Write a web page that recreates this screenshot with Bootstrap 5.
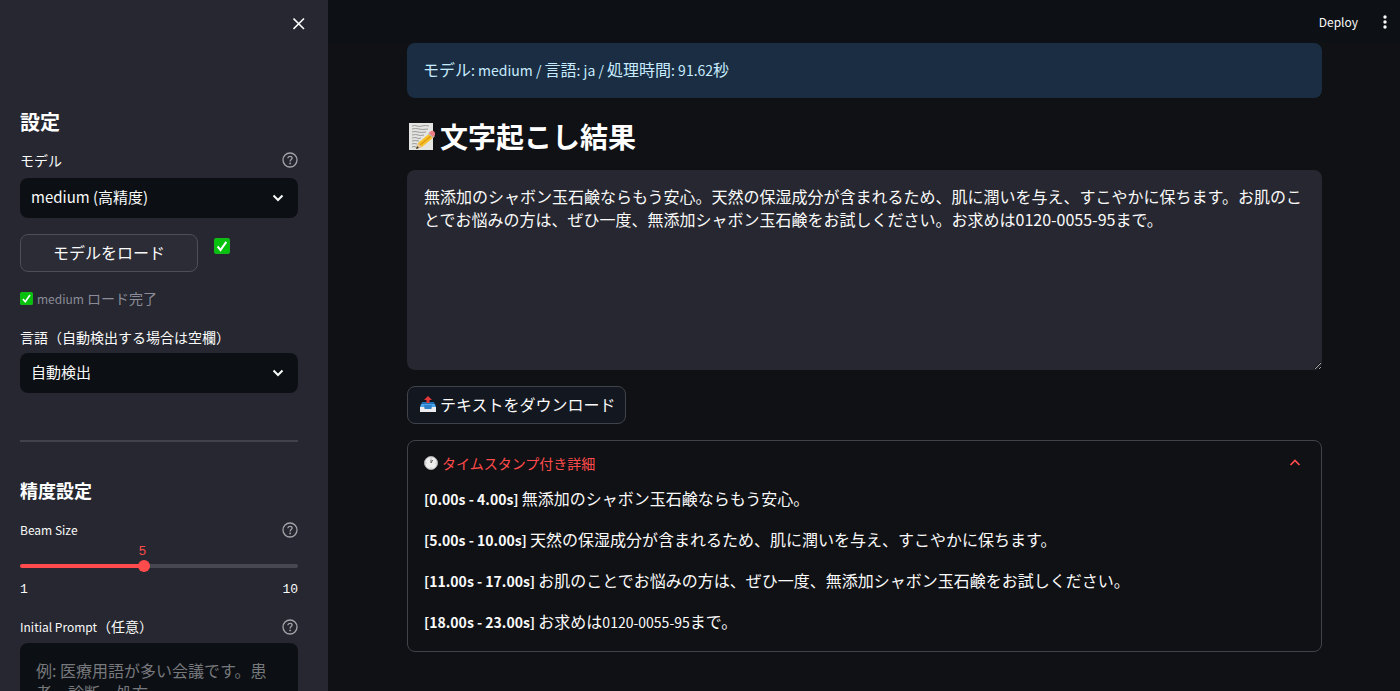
<!DOCTYPE html>
<html lang="ja" data-bs-theme="dark">
<head>
<meta charset="utf-8">
<meta name="viewport" content="width=device-width, initial-scale=1">
<title>文字起こし</title>
<link href="https://cdn.jsdelivr.net/npm/bootstrap@5.3.0/dist/css/bootstrap.min.css" rel="stylesheet">
<style>
  :root { --panel: #262730; --ink: #fafafa; --field: #0c1014; --accent: #ff4b4b; --line: #41434b; }
  body { background: #101115; color: var(--ink); font: 400 16px/24px "Noto Sans CJK JP", sans-serif; }
  .side-panel { width: 328px; background: var(--panel); padding: 0 30px 0 20px; overflow-y: auto; scrollbar-width: none; }
  .side-top { height: 110px; padding-top: 12px; margin-right: -7px; }
  .main-pane { overflow-y: auto; scrollbar-width: none; }
  .top-bar { height: 43px; background: #0d1014; padding: 0 8px 0 0; gap: 20px; }
  .page-body { padding: 0 78px 39px 79px; }
  .bare { background: none; border: 0; padding: 0; color: inherit; line-height: 0; }
  .latin { font-size: 14px; line-height: 16px; }
  .latin-sm { font-size: 12px; }
  h1, h2, h3 { font-weight: 700; margin: 0; }
  h1 { font-size: 28px; line-height: 40px; margin: 18px 0 14px; }
  h2 { font-size: 20px; line-height: 24px; }
  h3 { font-size: 18px; line-height: 24px; }
  .field-label { font-size: 14px; line-height: 20px; }
  .field-label-lone { margin: 18px 0 6px; }
  .help { color: #a3a4a9; }
  .pick { font-size: 15px; line-height: 22px; height: 40px; padding: 8px 40px 10px 11px; border: 0; border-radius: 8px; color: var(--ink); background-color: var(--field);
    background-image: url("data:image/svg+xml,%3Csvg xmlns='http://www.w3.org/2000/svg' viewBox='0 0 12 12'%3E%3Cpath d='M1.5 3.5 6 8l4.500-4.500' fill='none' stroke='%23fafafa' stroke-width='2'/%3E%3C/svg%3E"); background-size: 12px 12px; background-position: right 14px center; }
  .act { height: 38px; border: 1px solid #4d4e58; border-radius: 8px; padding: 0 12px 3px; font-size: 16px; line-height: 32px; color: var(--ink); background: #2b2c36; }
  .act-wide { width: 64%; }
  .act-dark { background: #131720; border-color: var(--line); padding-right: 9px; }
  .caption-line { font-size: 14px; line-height: 20px; color: #8b8c98; }
  .divider { height: 2px; background: #41424c; border: 0; opacity: 1; margin: 47px 0 36px; }
  .mono { font: 13px/16px "Liberation Mono", monospace; }
  .slider-box { position: relative; padding-top: 20px; }
  .slider-box output { position: absolute; top: 4px; left: 44%; transform: translateX(-50%); color: var(--accent); }
  .slider-ends { margin: 10px 0 18px; }
  .slider { appearance: none; display: block; width: 100%; height: 12px; margin: 0; background: none; }
  .slider::-webkit-slider-runnable-track { height: 4px; border-radius: 4px; background: linear-gradient(to right, var(--accent) 44%, #464751 44%); }
  .slider::-webkit-slider-thumb { appearance: none; width: 12px; height: 12px; margin-top: -4px; border-radius: 50%; background: var(--accent); }
  .prompt-box { background: var(--field); border: 0; border-radius: 8px; height: 96px; padding: 16px; line-height: 22px; resize: none; color: var(--ink); }
  .prompt-box::placeholder { color: #77787c; }
  .info-box { background: #1a2d42; color: #c7ebff; border: 0; border-radius: 8px; padding: 14px 16px 17px; margin: 0; }
  .result-box { display: block; background: var(--panel); border: 0; border-radius: 8px; height: 200px; padding: 15px 16px 16px 17px; line-height: 23px; color: var(--ink); resize: vertical; }
  .detail-box { border: 1px solid var(--line); border-radius: 8px; padding: 12px 16px 18px; }
  .detail-box summary { list-style: none; color: var(--accent); font-size: 14px; line-height: 20px; padding-right: 4px; margin-bottom: 13px; }
  .detail-box p { margin: 0 0 17px; }
  .detail-box p:last-child { margin: 0; }
</style>
</head>
<body>
<svg class="d-none">
  <symbol id="check" viewBox="0 0 16 16"><rect width="16" height="16" rx="2" fill="#18b51c"/><rect x="1" y="1" width="14" height="14" rx="1" fill="#06c20d"/><path d="M3.600 8.500 6.500 12 12.300 3.800" fill="none" stroke="#fff" stroke-width="2"/></symbol>
  <symbol id="help" viewBox="0 0 16 16"><circle cx="8" cy="8" r="7" fill="none" stroke="currentColor" stroke-width="1.300"/><path d="M5.900 6.300C6 4.900 6.800 4.300 8 4.300c1.300 0 2.100.8 2.100 1.800C10.100 7.500 8.100 7.600 8.100 9.400" fill="none" stroke="currentColor" stroke-width="1.300"/><circle cx="8.100" cy="11.400" r=".9" fill="currentColor"/></symbol>
</svg>
<div class="d-flex vh-100 overflow-hidden">
  <aside class="side-panel flex-shrink-0">
    <div class="side-top d-flex justify-content-end align-items-start">
      <button class="bare" aria-label="閉じる"><svg width="12" height="24" viewBox="0 0 12 24"><path d="m1 6.500 10.500 10.500M11.500 6.500 1 17" transform="translate(-.5)" stroke="#fafafa" stroke-width="1.600"/></svg></button>
    </div>
    <h2>設定</h2>
    <div class="d-flex justify-content-between align-items-center field-label mt-3 mb-2">
      <label for="model">モデル</label>
      <button class="bare help" aria-label="ヘルプ"><svg width="16" height="16"><use href="#help"/></svg></button>
    </div>
    <select id="model" class="form-select pick"><option>medium (高精度)</option></select>
    <div class="d-flex gap-3 mt-3">
      <button class="act act-wide">モデルをロード</button>
      <svg class="mt-1" width="16" height="16" role="img" aria-label="完了"><use href="#check"/></svg>
    </div>
    <div class="caption-line d-flex align-items-center mt-3"><svg class="me-1" width="13" height="13"><use href="#check"/></svg><span><span class="latin-sm">medium</span> ロード完了</span></div>
    <label for="lang" class="field-label field-label-lone d-block">言語（自動検出する場合は空欄）</label>
    <select id="lang" class="form-select pick"><option>自動検出</option></select>
    <hr class="divider">
    <h3>精度設定</h3>
    <div class="d-flex justify-content-between align-items-center field-label field-label-lone mb-0">
      <label for="beam" class="latin-sm">Beam Size</label>
      <button class="bare help" aria-label="ヘルプ"><svg width="16" height="16"><use href="#help"/></svg></button>
    </div>
    <div class="slider-box">
      <output for="beam" class="mono">5</output>
      <input id="beam" class="slider" type="range" min="1" max="10" value="5">
    </div>
    <div class="d-flex justify-content-between mono slider-ends"><span>1</span><span>10</span></div>
    <div class="d-flex justify-content-between align-items-center field-label field-label-lone">
      <label for="prompt"><span class="latin-sm">Initial Prompt</span>（任意）</label>
      <button class="bare help" aria-label="ヘルプ"><svg width="16" height="16"><use href="#help"/></svg></button>
    </div>
    <textarea id="prompt" class="form-control prompt-box" placeholder="例: 医療用語が多い会議です。患者、診断、処方..."></textarea>
  </aside>
  <main class="main-pane flex-grow-1">
    <header class="top-bar d-flex justify-content-end align-items-center sticky-top">
      <button class="bare latin-sm">Deploy</button>
      <button class="bare" aria-label="メニュー"><svg width="14" height="16" viewBox="0 0 14 16" fill="#fafafa"><circle cx="7" cy="3" r="1.700"/><circle cx="7" cy="8" r="1.700"/><circle cx="7" cy="13" r="1.700"/></svg></button>
    </header>
    <div class="page-body">
      <div class="alert info-box">モデル<span class="latin">: medium / </span>言語<span class="latin">: ja / </span>処理時間<span class="latin">: 91.62</span>秒</div>
      <h1 class="d-flex align-items-center">
        <svg class="me-1" width="29" height="30" viewBox="0 0 29 30"><path d="M2 2h24v27H2z" fill="#e4e4e2"/><path d="M5 5q3-1 5 0t5 0 7 0M5 8q4-1 7 0t9 0M5 11q3-1 6 0t8 0M5 14q4-1 6 0t6 0M5 17q3-1 5 0t4 0M5 20q3-1 7 0M5 23q2-1 5 0M5 26q2-1 4 0" fill="none" stroke="#999" stroke-width="1"/><path d="m9 28 2-6L23 12l4 4-12 10z" fill="#f6c32c"/><path d="m12 24 12-10 1 1-12 10z" fill="#e39a13"/><path d="m9 28 2-6 4 4z" fill="#e8c596"/><path d="m9 28 1-3 2 2z" fill="#333"/><path d="m21 13 2-2 5 4-2 2z" fill="#b5bac0"/><path d="m22 12 2-2q3-1 4 2v2l-2 2z" fill="#ef7e83"/></svg>
        文字起こし結果
      </h1>
      <textarea class="form-control result-box" aria-label="文字起こし結果">無添加のシャボン玉石鹸ならもう安心。天然の保湿成分が含まれるため、肌に潤いを与え、すこやかに保ちます。お肌のことでお悩みの方は、ぜひ一度、無添加シャボン玉石鹸をお試しください。お求めは0120-0055-95まで。</textarea>
      <button class="act act-dark d-flex align-items-center my-3"><svg class="me-1" width="16" height="18" viewBox="0 0 16 18"><path d="m2 7-2 6h16l-2-6z" fill="#1f6fb5"/><path d="M1 9h14l1 4H0z" fill="#4aa3e8"/><path d="M0 12h4l1 2h6l1-2h4v5H0z" fill="#ececef"/><path d="M4 10h8l-1 4H5z" fill="#2c7fc9"/><path d="M6.500 8V5H4l4-4 4 4H9.500v3z" fill="#e5383b"/></svg>テキストをダウンロード</button>
      <details class="detail-box" open>
        <summary class="d-flex align-items-center"><svg class="me-1" width="14" height="14" viewBox="0 0 14 14"><circle cx="7" cy="7" r="6.500" fill="#eee" stroke="#aaa"/><path d="M7 7V3.500M7 7l1.700-3" stroke="#555" stroke-width=".9"/><path d="M7 1.500v1M7 11.500v1M1.500 7h1M11.500 7h1" stroke="#888" stroke-width=".7"/></svg>タイムスタンプ付き詳細
          <svg class="ms-auto" width="12" height="12" viewBox="0 0 12 12"><path d="M1.500 8 6 3.500 10.500 8" fill="none" stroke="#ff4b4b" stroke-width="1.700"/></svg></summary>
        <p><strong class="latin">[0.00s - 4.00s] </strong>無添加のシャボン玉石鹸ならもう安心。</p>
        <p><strong class="latin">[5.00s - 10.00s] </strong>天然の保湿成分が含まれるため、肌に潤いを与え、すこやかに保ちます。</p>
        <p><strong class="latin">[11.00s - 17.00s] </strong>お肌のことでお悩みの方は、ぜひ一度、無添加シャボン玉石鹸をお試しください。</p>
        <p><strong class="latin">[18.00s - 23.00s] </strong>お求めは<span class="latin">0120-0055-95</span>まで。</p>
      </details>
    </div>
  </main>
</div>
<script src="https://cdn.jsdelivr.net/npm/bootstrap@5.3.0/dist/js/bootstrap.bundle.min.js"></script>
</body>
</html>
